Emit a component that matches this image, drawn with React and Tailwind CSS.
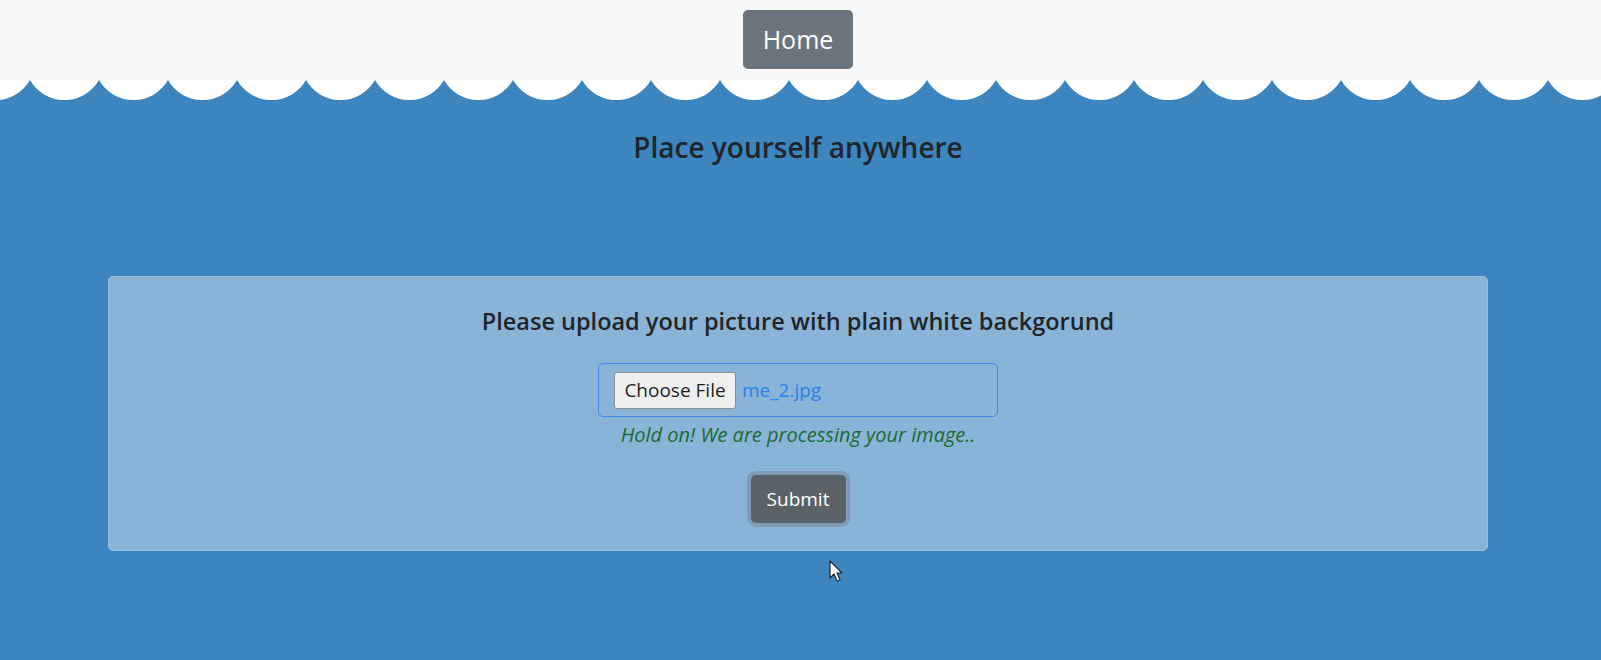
import React from "react";

const FONT = "font-['Open_Sans','Noto_Sans',sans-serif]";

function Scallops() {
  return (
    <svg className="block w-full h-[20px]" aria-hidden="true">
      <defs>
        <pattern id="scallop" x="30" y="0" width="69" height="20" patternUnits="userSpaceOnUse">
          <path d="M0 0 A39.75 39.75 0 0 0 69 0 Z" fill="#ffffff" />
        </pattern>
      </defs>
      <rect width="100%" height="20" fill="url(#scallop)" />
    </svg>
  );
}

function Cursor() {
  return (
    <svg className="absolute left-[829px] top-[560px]" width="15" height="23" viewBox="0 0 15 23">
      <path d="M1 1 L1 18 L5 14 L8 21 L11 20 L8 13 L13 13 Z" fill="#ffffff" stroke="#1b2a3a" strokeWidth="1.2" strokeLinejoin="round" />
    </svg>
  );
}

export default function App() {
  return (
    <div className={`relative w-full h-[660px] overflow-hidden bg-[#3c85bf] ${FONT}`}>
      {/* top bar */}
      <div className="h-[80px] bg-[#f8f9fa] pr-[5px] flex justify-center pt-[10px]">
        <button className="h-[59px] w-[110px] rounded-[5px] bg-[#6c757d] text-white text-[25px] leading-none">
          Home
        </button>
      </div>
      <Scallops />

      <div className="pr-[5px]">
        <h1 className="mt-[29px] text-center text-[28px] leading-[36px] font-semibold text-[#212529]">
          Place yourself anywhere
        </h1>

        {/* upload card */}
        <div className="mt-[111px] mx-[108px] h-[275px] rounded-[5px] border border-[#9dc0df] bg-[#8ab4d7] flex flex-col items-center pt-[29px]">
          <h2 className="text-[23.5px] leading-[30px] font-semibold text-[#212529]">
            Please upload your picture with plain white backgorund
          </h2>

          <div className="mt-[27px] w-[400px] h-[54px] rounded-[5px] border border-[#3f8cf5] flex items-center pl-[15px]">
            <span className="h-[37px] w-[122px] flex items-center justify-center rounded-[3px] border border-[#8f8f8f] bg-[#efefef] text-[19px] text-[#1f1f1f]">
              Choose File
            </span>
            <span className="ml-[6px] text-[19px] text-[#2b7ff0]">me_2.jpg</span>
          </div>

          <p className="mt-[4px] text-[20px] leading-[28px] italic text-[#1b6a34]">
            Hold on! We are processing your image..
          </p>

          <button className="mt-[26px] h-[48px] w-[95px] rounded-[5px] bg-[#5a6167] text-white text-[19px] shadow-[0_0_0_4px_rgba(120,135,150,0.55)]">
            Submit
          </button>
        </div>
      </div>

      <Cursor />
    </div>
  );
}
